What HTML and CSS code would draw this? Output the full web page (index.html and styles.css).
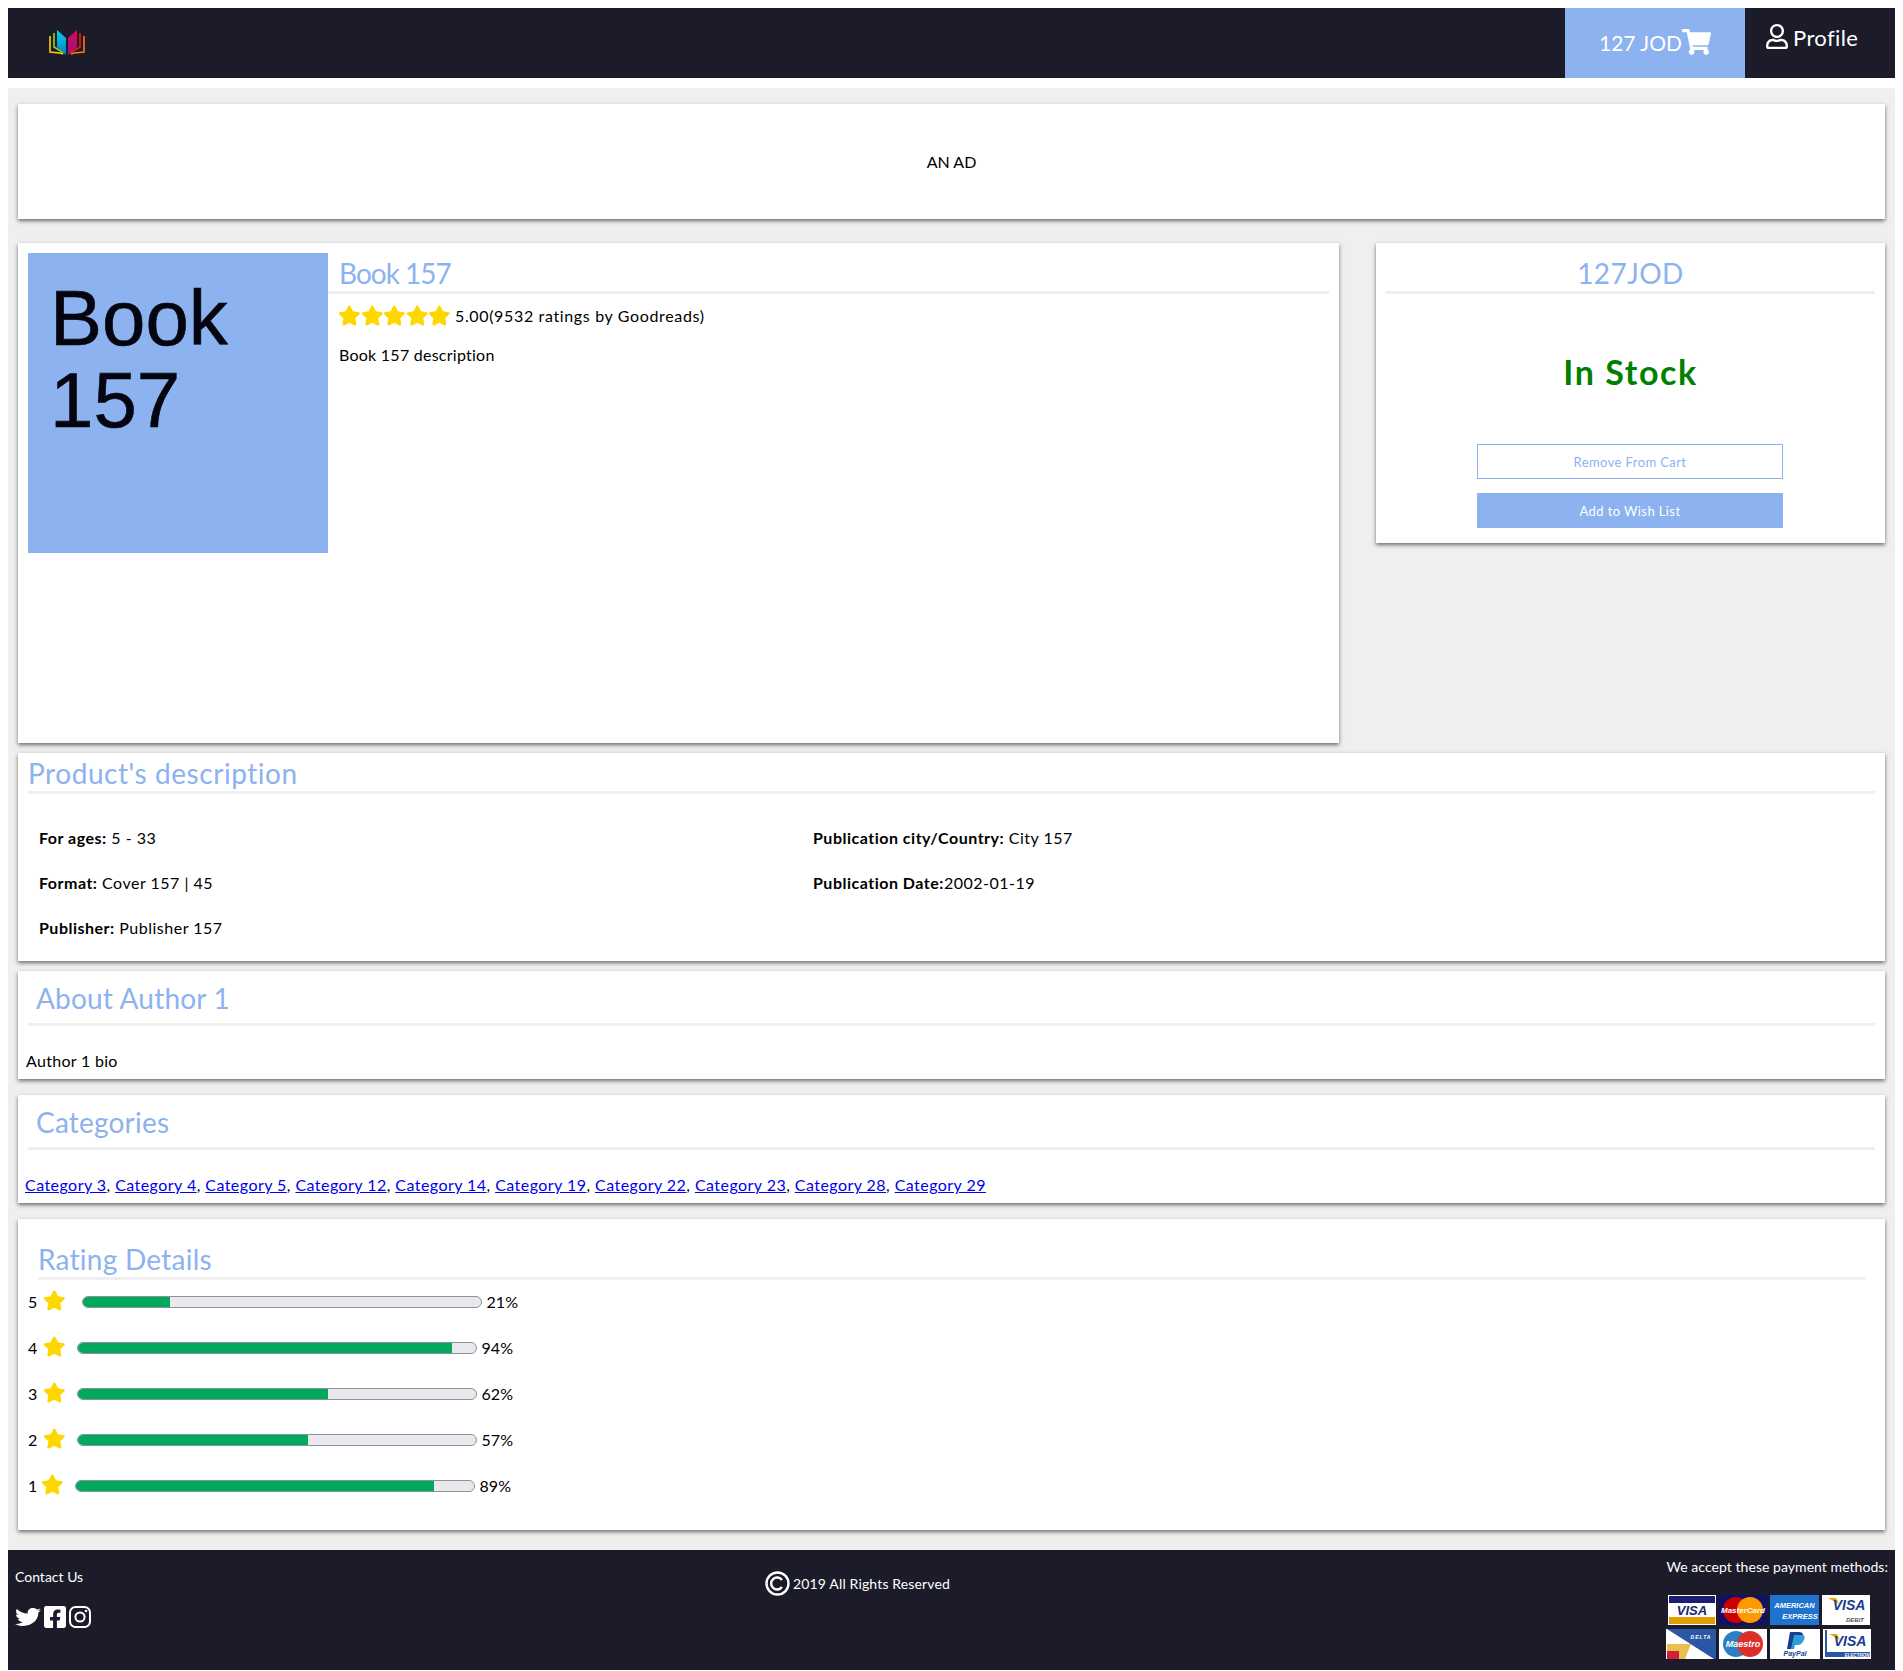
FILE: index.html
```html
<!DOCTYPE html>
<html lang="en">
<head>
    <meta charset="UTF-8">
    <meta name="viewport" content="width=device-width, initial-scale=1.0">
    <title>Book 157</title>
    <link rel="stylesheet" href="styles.css">
</head>
<body>
    <svg class="sprites" width="0" height="0" aria-hidden="true">
        <symbol id="star" viewBox="0 0 576 512"><path d="M259.3 17.8L194 150.2 47.9 171.5c-26.2 3.8-36.7 36.1-17.7 54.6l105.7 103-25 145.5c-4.5 26.3 23.2 46 46.4 33.7L288 439.6l130.7 68.7c23.2 12.2 50.9-7.4 46.4-33.7l-25-145.5 105.7-103c19-18.5 8.5-50.8-17.7-54.6L382 150.2 316.7 17.8c-11.7-23.6-45.6-23.9-57.4 0z"/></symbol>
    </svg>

    <nav class="navbar">
        <a class="logo" href="#">
            <svg width="36" height="26" viewBox="0 0 36 26">
                <defs>
                    <linearGradient id="pageBlue" x1="0" y1="0" x2="0" y2="1"><stop offset="0" stop-color="#00d0f0"/><stop offset="1" stop-color="#0a7fc0"/></linearGradient>
                    <linearGradient id="pagePink" x1="0" y1="0" x2="0" y2="1"><stop offset="0" stop-color="#e0084f"/><stop offset="1" stop-color="#96108e"/></linearGradient>
                </defs>
                <path d="M1 6v16l10 1 3 1" fill="none" stroke="#ffd000" stroke-width="1.6"/>
                <path d="M5 3v14l10 6" fill="none" stroke="#8fd81c" stroke-width="1.6"/>
                <path d="M8 0l9 8v17l-9-8z" fill="url(#pageBlue)"/>
                <path d="M28 0l-9 8v17l9-8z" fill="url(#pagePink)"/>
                <path d="M31 3v14l-10 6" fill="none" stroke="#f01810" stroke-width="1.6"/>
                <path d="M35 6v16l-10 1-3 1" fill="none" stroke="#ff7a10" stroke-width="1.6"/>
            </svg>
        </a>
        <a class="cart-link" href="#">
            <span>127 JOD</span>
            <svg width="29" height="26" viewBox="0 0 576 512" fill="#fff"><path d="M528.12 301.319l47.273-208C578.806 78.301 567.391 64 551.99 64H159.208l-9.166-44.81C147.758 8.021 137.93 0 126.529 0H24C10.745 0 0 10.745 0 24v16c0 13.255 10.745 24 24 24h69.883l70.248 343.435C147.325 417.1 136 435.222 136 456c0 30.928 25.072 56 56 56s56-25.072 56-56c0-15.674-6.447-29.835-16.824-40h209.647C430.447 426.165 424 440.326 424 456c0 30.928 25.072 56 56 56s56-25.072 56-56c0-22.172-12.888-41.332-31.579-50.405l5.517-24.276c3.413-15.018-8.002-29.319-23.403-29.319H218.117l-6.545-32h293.145c11.206 0 20.92-7.754 23.403-18.681z"/></svg>
        </a>
        <a class="profile-link" href="#">
            <svg width="22" height="25" viewBox="0 0 448 512" fill="#fff"><path d="M313.6 304c-28.7 0-42.5 16-89.6 16-47.1 0-60.8-16-89.6-16C60.2 304 0 364.2 0 438.4V464c0 26.5 21.5 48 48 48h352c26.5 0 48-21.5 48-48v-25.6c0-74.2-60.2-134.4-134.4-134.4zM400 464H48v-25.6c0-47.6 38.8-86.4 86.4-86.4 14.6 0 38.3 16 89.6 16 51.7 0 74.9-16 89.6-16 47.6 0 86.4 38.8 86.4 86.4V464zM224 288c79.5 0 144-64.5 144-144S303.5 0 224 0 80 64.5 80 144s64.5 144 144 144zm0-240c52.9 0 96 43.1 96 96s-43.1 96-96 96-96-43.1-96-96 43.1-96 96-96z"/></svg>
            <span>Profile</span>
        </a>
    </nav>

    <main class="content">
        <section class="card ad">AN AD</section>

        <div class="product-row">
            <section class="card product">
                <div class="cover">Book<br>157</div>
                <div class="product-info">
                    <h2 class="title title-book">Book 157</h2>
                    <div class="rating-line">
                        <svg class="star"><use href="#star"/></svg>
                        <svg class="star"><use href="#star"/></svg>
                        <svg class="star"><use href="#star"/></svg>
                        <svg class="star"><use href="#star"/></svg>
                        <svg class="star"><use href="#star"/></svg>
                        <span>5.00(9532 ratings by Goodreads)</span>
                    </div>
                    <p class="book-desc">Book 157 description</p>
                </div>
            </section>

            <section class="card buy">
                <h2 class="title title-price">127JOD</h2>
                <div class="stock">In Stock</div>
                <a class="btn btn-outline" href="#">Remove From Cart</a>
                <a class="btn btn-fill" href="#">Add to Wish List</a>
            </section>
        </div>

        <section class="card details">
            <h2 class="title title-details">Product's description</h2>
            <div class="details-grid">
                <div><b>For ages:</b> 5 - 33</div>
                <div><b>Publication city/Country:</b> City 157</div>
                <div><b>Format:</b> Cover 157 | 45</div>
                <div><b>Publication Date:</b>2002-01-19</div>
                <div><b>Publisher:</b> Publisher 157</div>
            </div>
        </section>

        <section class="card author">
            <h2 class="title title-wide">About Author 1</h2>
            <p class="wide-text">Author 1 bio</p>
        </section>

        <section class="card categories">
            <h2 class="title title-wide">Categories</h2>
            <p class="wide-text cat-links">
                <a href="#">Category 3</a>, <a href="#">Category 4</a>, <a href="#">Category 5</a>, <a href="#">Category 12</a>, <a href="#">Category 14</a>, <a href="#">Category 19</a>, <a href="#">Category 22</a>, <a href="#">Category 23</a>, <a href="#">Category 28</a>, <a href="#">Category 29</a>
            </p>
        </section>

        <section class="card ratings">
            <h2 class="title title-rating">Rating Details</h2>
            <div class="rate-row">
                <span class="rate-num">5</span><svg class="star"><use href="#star"/></svg>
                <div class="bar bar-first"><div class="bar-fill" style="width: 22%"></div></div>
                <span class="rate-pct">21%</span>
            </div>
            <div class="rate-row">
                <span class="rate-num">4</span><svg class="star"><use href="#star"/></svg>
                <div class="bar"><div class="bar-fill" style="width: 94%"></div></div>
                <span class="rate-pct">94%</span>
            </div>
            <div class="rate-row">
                <span class="rate-num">3</span><svg class="star"><use href="#star"/></svg>
                <div class="bar"><div class="bar-fill" style="width: 63%"></div></div>
                <span class="rate-pct">62%</span>
            </div>
            <div class="rate-row">
                <span class="rate-num">2</span><svg class="star"><use href="#star"/></svg>
                <div class="bar"><div class="bar-fill" style="width: 58%"></div></div>
                <span class="rate-pct">57%</span>
            </div>
            <div class="rate-row">
                <span class="rate-num rate-num-narrow">1</span><svg class="star"><use href="#star"/></svg>
                <div class="bar"><div class="bar-fill" style="width: 90%"></div></div>
                <span class="rate-pct">89%</span>
            </div>
        </section>
    </main>

    <footer class="footer">
        <div class="contact">
            <a href="#">Contact Us</a>
            <div class="social">
                <svg width="26" height="22" viewBox="0 0 512 512" fill="#fff" preserveAspectRatio="none"><path d="M459.37 151.716c.325 4.548.325 9.097.325 13.645 0 138.72-105.583 298.558-298.558 298.558-59.452 0-114.68-17.219-161.137-47.106 8.447.974 16.568 1.299 25.34 1.299 49.055 0 94.213-16.568 130.274-44.832-46.132-.975-84.792-31.188-98.112-72.772 6.498.974 12.995 1.624 19.818 1.624 9.421 0 18.843-1.3 27.614-3.573-48.081-9.747-84.143-51.98-84.143-102.985v-1.299c13.969 7.797 30.214 12.67 47.431 13.319-28.264-18.843-46.781-51.005-46.781-87.391 0-19.492 5.197-37.36 14.294-52.954 51.655 63.675 129.3 105.258 216.365 109.807-1.624-7.797-2.599-15.918-2.599-24.04 0-57.828 46.782-104.934 104.934-104.934 30.213 0 57.502 12.67 76.67 33.137 23.715-4.548 46.456-13.32 66.599-25.34-7.798 24.366-24.366 44.833-46.132 57.827 21.117-2.273 41.584-8.122 60.426-16.243-14.292 20.791-32.161 39.308-52.628 54.253z"/></svg>
                <svg width="22" height="22" viewBox="0 32 448 448" fill="#fff"><path d="M400 32H48A48 48 0 0 0 0 80v352a48 48 0 0 0 48 48h137.25V327.69h-63V256h63v-54.64c0-62.15 37-96.48 93.67-96.48 27.14 0 55.52 4.84 55.52 4.84v61h-31.27c-30.81 0-40.42 19.12-40.42 38.73V256h68.78l-11 71.69h-57.78V480H400a48 48 0 0 0 48-48V80a48 48 0 0 0-48-48z"/></svg>
                <svg width="22" height="22" viewBox="0 0 22 22" fill="none" stroke="#fff" stroke-width="2"><rect x="1" y="1" width="20" height="20" rx="5.5"/><circle cx="11" cy="11" r="4.6"/><circle cx="17" cy="5" r="1.3" fill="#fff" stroke="none"/></svg>
            </div>
        </div>
        <div class="copyright">
            <svg width="25" height="25" viewBox="0 0 25 25" fill="none" stroke="#fff"><circle cx="12.5" cy="12.5" r="11" stroke-width="2.4"/><path d="M17 9a6 6 0 1 0 0 7" stroke-width="2.4"/></svg>
            <span>2019 All Rights Reserved</span>
        </div>
        <div class="payment">
            <div class="payment-title">We accept these payment methods:</div>
            <div class="pay-row pay-row-top">
                <svg width="48" height="30" viewBox="0 0 48 30"><rect width="48" height="30" fill="#fff"/><rect x="1" y="1" width="46" height="7" fill="#1a1f71"/><rect x="1" y="22" width="46" height="7" fill="#e09c00"/><text x="24" y="20" class="pay-text" font-size="13" fill="#1a1f71">VISA</text></svg>
                <svg width="48" height="30" viewBox="0 0 48 30"><rect width="48" height="30" fill="#10106a"/><circle cx="17" cy="15" r="13" fill="#cc0000"/><circle cx="31" cy="15" r="13" fill="#ff9900"/><text x="24" y="18" class="pay-text" font-size="8" fill="#fff">MasterCard</text></svg>
                <svg width="49" height="30" viewBox="0 0 49 30"><rect width="49" height="30" fill="#1f72cd"/><text x="24.5" y="13" class="pay-text" font-size="7.5" fill="#fff">AMERICAN</text><text x="30" y="24" class="pay-text" font-size="7.5" fill="#fff">EXPRESS</text></svg>
                <svg width="48" height="30" viewBox="0 0 48 30"><rect width="48" height="30" fill="#fff"/><path d="M6 3h8l3 6z" fill="#f0a800"/><text x="27" y="15" class="pay-text" font-size="14" fill="#1a3a8f">VISA</text><text x="33" y="27" class="pay-text" font-size="6" fill="#555">DEBIT</text></svg>
            </div>
            <div class="pay-row">
                <svg width="50" height="30" viewBox="0 0 50 30"><rect width="50" height="30" fill="#fff"/><path d="M1 0h49v30h-2z" fill="#2a57a5"/><path d="M1 15h24l-6 15h-18z" fill="#e8c050"/><path d="M1 22h12v8h-12z" fill="#d0203a"/><text x="35" y="10" class="pay-text" font-size="5" fill="#fff" letter-spacing="1">DELTA</text></svg>
                <svg width="48" height="30" viewBox="0 0 48 30"><rect width="48" height="30" fill="#fff"/><circle cx="17" cy="15" r="13" fill="#2b7fc3"/><circle cx="31" cy="15" r="13" fill="#d9302c"/><text x="24" y="18" class="pay-text" font-size="9" fill="#fff">Maestro</text></svg>
                <svg width="50" height="30" viewBox="0 0 50 30"><rect width="50" height="30" fill="#fff"/><path d="M20 3h9c4 0 5 3 4 6s-3 5-7 5h-3l-1 6h-5z" fill="#1b3e8f"/><path d="M24 6h8c3 0 3 3 2 5s-3 5-6 5h-3l-1 4h-3z" fill="#2c9fd9"/><text x="25" y="27" class="pay-text" font-size="7" fill="#1b3e8f">PayPal</text></svg>
                <svg width="48" height="30" viewBox="0 0 48 30"><rect width="48" height="30" fill="#fff"/><path d="M2 1v27h45v-5h-43v-22z" fill="#2a57a5"/><path d="M6 5h8l3 6z" fill="#f0a800"/><text x="27" y="17" class="pay-text" font-size="14" fill="#1a3a8f">VISA</text><text x="34" y="27.5" class="pay-text" font-size="4.5" fill="#fff">ELECTRON</text></svg>
            </div>
        </div>
    </footer>
</body>
</html>
```

FILE: styles.css
```css
body {
    margin: 8px 8px 1px;
    font-family: "Comic Sans MS", "Lato", sans-serif;
    font-size: 16px;
    color: #000;
    background: #fff;
}

a {
    text-decoration: none;
}

.sprites {
    display: block;
    height: 0;
}

/* top bar */
.navbar {
    display: flex;
    align-items: stretch;
    height: 70px;
    background-color: #1b1b29;
}

.logo {
    display: flex;
    align-items: center;
    margin-left: 41px;
    margin-right: auto;
}

.cart-link {
    display: flex;
    align-items: center;
    width: 180px;
    padding: 0 34px 2px 34px;
    box-sizing: border-box;
    background-color: #8cb2ef;
    color: #fff;
    font-size: 21px;
}

.cart-link span {
    white-space: nowrap;
}

.cart-link svg {
    flex-shrink: 0;
    margin-bottom: 1px;
}

.profile-link {
    display: flex;
    align-items: flex-start;
    gap: 5px;
    width: 150px;
    padding: 16px 0 0 21px;
    box-sizing: border-box;
    color: #fff;
    font-size: 22px;
    letter-spacing: 0.4px;
    line-height: 28px;
}

/* grey page area */
.content {
    margin-top: 10px;
    padding: 16px 10px 20px;
    background-color: #efefef;
}

.card {
    background-color: #fff;
    box-shadow: 0 2px 4px rgba(0, 0, 0, 0.55);
}

.ad {
    display: flex;
    justify-content: center;
    align-items: center;
    height: 115px;
    font-size: 16px;
}

.product-row {
    display: flex;
    justify-content: space-between;
    align-items: flex-start;
    margin-top: 24px;
}

.product {
    display: flex;
    width: 1321px;
    height: 500px;
    padding: 10px;
    box-sizing: border-box;
}

.cover {
    width: 300px;
    height: 300px;
    padding: 24px 0 0 22px;
    box-sizing: border-box;
    background-color: #8cb2ef;
    color: #05050f;
    font-family: "Liberation Sans", Arial, sans-serif;
    font-size: 78px;
    line-height: 82px;
    -webkit-text-stroke: 0.6px #05050f;
}

.product-info {
    flex: 1;
}

.title {
    margin: 0;
    border-bottom: 3px solid #efefef;
    color: #8cb2ef;
    font-weight: normal;
    font-size: 28px;
}

.title-book {
    height: 38px;
    padding-left: 11px;
    line-height: 40px;
    letter-spacing: -1px;
}

.rating-line {
    display: flex;
    align-items: center;
    margin: 10px 0 0 10px;
    height: 22px;
}

.star {
    width: 22.6px;
    height: 21px;
    fill: #ffd700;
}

.rating-line span {
    margin-left: 4px;
    letter-spacing: 0.65px;
}

.book-desc {
    margin: 18px 0 0 11px;
    line-height: 22px;
    letter-spacing: 0.25px;
}

/* price box */
.buy {
    width: 509px;
    height: 300px;
    padding: 10px;
    box-sizing: border-box;
}

.title-price {
    height: 38px;
    text-align: center;
    line-height: 40px;
    letter-spacing: 0.4px;
}

.stock {
    margin-top: 56px;
    color: #008000;
    font-size: 34px;
    font-weight: bold;
    line-height: 44px;
    text-align: center;
    letter-spacing: 1.6px;
}

.btn {
    display: block;
    width: 306px;
    margin-left: 91px;
    box-sizing: border-box;
    font-size: 13px;
    text-align: center;
    letter-spacing: 0.4px;
}

.btn-outline {
    height: 35px;
    margin-top: 50px;
    border: 1px solid #8cb2ef;
    color: #8cb2ef;
    line-height: 34px;
}

.btn-fill {
    height: 35px;
    margin-top: 14px;
    background-color: #8cb2ef;
    color: #fff;
    line-height: 36px;
}

/* description */
.details {
    margin-top: 10px;
    height: 208px;
    padding: 10px;
    box-sizing: border-box;
}

.title-details {
    height: 28px;
    line-height: 20px;
    letter-spacing: 0.55px;
}

.details-grid {
    display: grid;
    grid-template-columns: 774px 1fr;
    grid-auto-rows: 45px;
    margin-top: 21px;
    padding-left: 11px;
    line-height: 45px;
    letter-spacing: 0.5px;
}

.author, .categories {
    height: 108px;
    padding: 8px;
    box-sizing: border-box;
}

.author {
    margin-top: 10px;
}

.categories {
    margin-top: 16px;
}

.title-wide {
    height: 42px;
    margin: 2px 2px 0;
    padding-left: 8px;
    line-height: 34px;
    letter-spacing: 0.2px;
}

.wide-text {
    margin: 25px 0 0;
    line-height: 20px;
    letter-spacing: 0.3px;
}

.cat-links {
    margin-left: -1px;
    white-space: nowrap;
    letter-spacing: 0.45px;
}

.cat-links a {
    color: #0000ee;
    text-decoration: underline;
}

/* rating bars */
.ratings {
    margin-top: 16px;
    height: 311px;
    padding: 21px 20px 0 10px;
    box-sizing: border-box;
}

.title-rating {
    height: 37px;
    margin-bottom: -2px;
    margin-left: 10px;
    line-height: 38px;
    letter-spacing: 0.25px;
}

.rate-row {
    display: flex;
    align-items: center;
    height: 46px;
}

.rate-row .star {
    margin-top: -2px;
}

.rate-num {
    width: 15px;
}

.rate-num-narrow {
    width: 13px;
}

.bar {
    width: 400px;
    height: 12px;
    margin-top: 1px;
    margin-left: 11px;
    box-sizing: border-box;
    border: 1px solid #8f8f9d;
    border-radius: 6px;
    overflow: hidden;
    background-color: #e9e9ed;
}

.bar-first {
    margin-left: 16px;
}

.bar-fill {
    height: 100%;
    background-color: #00a95c;
}

.rate-pct {
    margin-left: 5px;
}

/* footer */
.footer {
    display: grid;
    grid-template-columns: 750px 1fr auto;
    height: 120px;
    padding: 0 7px;
    background-color: #1b1b29;
    color: #fff;
}

.contact {
    padding-top: 18px;
    font-size: 14px;
}

.contact a {
    color: #fff;
    line-height: 18px;
}

.social {
    display: flex;
    gap: 3px;
    margin-top: 20px;
}

.copyright {
    display: flex;
    align-items: center;
    align-self: start;
    gap: 3px;
    margin-top: 21px;
    font-size: 14px;
    letter-spacing: 0.15px;
}

.payment {
    padding-top: 8px;
}

.payment-title {
    font-size: 14px;
    line-height: 18px;
    letter-spacing: 0.05px;
}

.pay-row {
    display: flex;
    gap: 3px;
    height: 30px;
    margin-top: 4px;
    margin-left: -1px;
}

.pay-row-top {
    margin-top: 19px;
    padding-left: 2px;
}

.pay-text {
    font-family: "Liberation Sans", Arial, sans-serif;
    font-weight: bold;
    font-style: italic;
    text-anchor: middle;
}
```
